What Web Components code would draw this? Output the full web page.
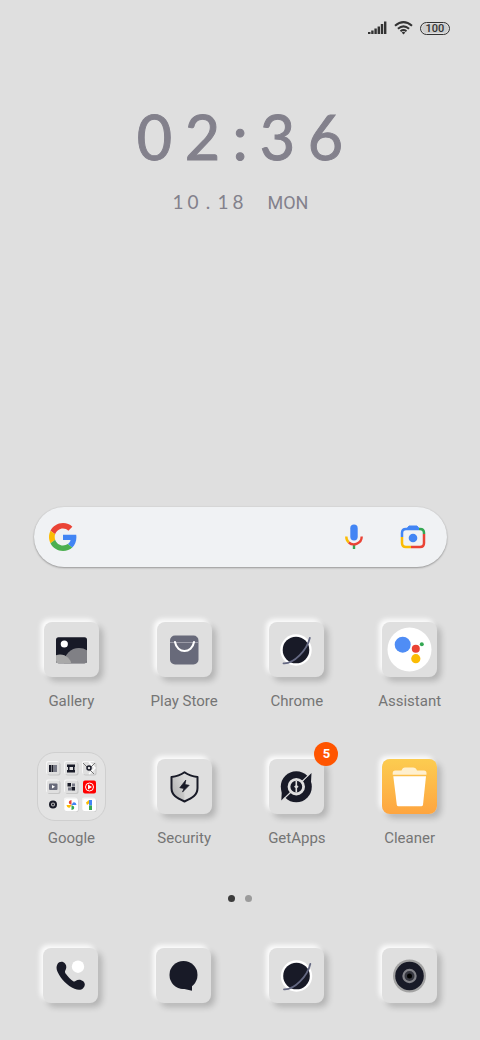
<!DOCTYPE html>
<html lang="en">
<head>
<meta charset="utf-8">
<meta name="viewport" content="width=device-width, initial-scale=1">
<title>Home screen</title>
<style>
  html, body { margin: 0; background: #dfdfdf; }
  body { font-family: Roboto, "Liberation Sans", sans-serif; color: #757575; }
</style>
</head>
<body>
<home-screen></home-screen>

<template id="status-bar">
  <style>
    :host { display: flex; justify-content: flex-end; align-items: center; gap: 7px; height: 14px; padding: 21px 30px 0 0; color: #333; }
    svg { display: block; }
    .battery { box-sizing: border-box; width: 30px; height: 13px; border: 1px solid #333; border-radius: 7px; background: #cdcdcd; box-shadow: inset 0 0 0 1px #dfdfdf; font-size: 11px; line-height: 12px; font-weight: 500; text-align: center; }
  </style>
  <svg width="19" height="14" viewBox="0 0 19 14" fill="#333"><path d="M0 11h2.500v2H0zM3.200 9.500h2.400V13H3.200zM6.400 7.500h2.400V13H6.400zM9.600 5.500H12V13H9.600zM12.800 3h2.400v10h-2.400zM16 .5h2.400V13H16z"/></svg>
  <svg width="19" height="14" viewBox="0 0 19 14" fill="none" stroke="#333" stroke-width="2"><path d="M1 4.800Q9.500-2.600 18 4.800M3.900 7.700Q9.500 3 15.100 7.700M6.500 10.200Q9.500 7.900 12.500 10.200"/><path d="M7.700 11.400Q9.500 10.200 11.300 11.400L9.500 13.500z" fill="#333" stroke="none"/></svg>
  <div class="battery">100</div>
</template>

<template id="clock-widget">
  <style>
    :host { display: block; text-align: center; color: #83818c; padding-top: 66px; }
    div { white-space: nowrap; }
    span { display: inline-block; }
    .time { font-family: Lato, sans-serif; font-size: 61px; line-height: 72px; -webkit-text-stroke: 1px #83818c; }
    .time span { width: 48px; }
    .time .colon { width: 27px; }
    .date { font-family: Lato, sans-serif; font-size: 19px; line-height: 24px; margin-top: 17px; }
    .date span { width: 15px; }
    .date .month { width: 43px; margin-left: 16px; font-family: Roboto, sans-serif; font-size: 18px; }
  </style>
  <div class="time"><span>0</span><span>2</span><span class="colon">:</span><span>3</span><span>6</span></div>
  <div class="date"><span>1</span><span>0</span><span>.</span><span>1</span><span>8</span> <span class="month">MON</span></div>
</template>

<template id="search-bar">
  <style>
    :host { display: block; margin: 0 33px 0 34px; }
    form { display: flex; align-items: center; height: 60px; padding: 0 20px 0 15px; border-radius: 30px; background: #f0f2f4; box-shadow: 0 1px 2px #0000004d, 0 0 2px #00000014; }
    svg { display: block; }
    input { flex: 1; min-width: 0; height: 40px; margin: 0 12px; padding: 0; border: 0; outline: 0; background: none; font: 16px Roboto, sans-serif; }
    button { padding: 0; border: 0; background: none; }
    .lens { margin-left: 35px; }
  </style>
  <form>
    <svg width="28" height="28" viewBox="0 0 48 48">
      <path fill="#ea4335" d="M24 9.500c3.540 0 6.710 1.220 9.210 3.600l6.850-6.850C35.900 2.380 30.470 0 24 0 14.620 0 6.510 5.380 2.560 13.220l7.980 6.190C12.430 13.720 17.740 9.500 24 9.500z"/>
      <path fill="#4285f4" d="M46.980 24.550c0-1.570-.15-3.090-.38-4.550H24v9.020h12.940c-.58 2.960-2.260 5.480-4.780 7.180l7.730 6c4.510-4.180 7.090-10.360 7.090-17.650z"/>
      <path fill="#fbbc05" d="M10.530 28.590c-.48-1.450-.76-2.990-.76-4.590s.27-3.140.76-4.590l-7.980-6.190C.92 16.460 0 20.120 0 24s.92 7.540 2.560 10.780l7.970-6.190z"/>
      <path fill="#4caf50" d="M24 48c6.480 0 11.930-2.130 15.890-5.810l-7.730-6c-2.150 1.450-4.920 2.300-8.160 2.300-6.260 0-11.570-4.220-13.470-9.910l-7.980 6.190C6.510 42.620 14.620 48 24 48z"/>
    </svg>
    <input type="search" aria-label="Search">
    <button type="button" aria-label="Voice search">
      <svg width="20" height="28" viewBox="0 0 20 28" fill="none" stroke-width="2.400">
        <rect x="6.300" y="1.500" width="7.400" height="16" rx="3.700" fill="#4285f4"/>
        <path d="M10 21v5" stroke="#34a853"/><path d="M2.300 13.500Q2.300 17.500 4.800 19.500" stroke="#fbbc04"/><path d="M4.800 19.500C9.500 23.500 17.700 20.500 17.700 13.500" stroke="#ea4335"/>
      </svg>
    </button>
    <button class="lens" type="button" aria-label="Camera search">
      <svg width="28" height="28" viewBox="0 0 28 28" fill="none" stroke-width="2.500">
        <path d="M3 14V10Q3 6 7 6H20" stroke="#4285f4"/><path d="M8 5.500L10 3h8l2 2.500z" fill="#4285f4" stroke="#4285f4" stroke-width="1"/>
        <path d="M20 6h1q4 0 4 4v1" stroke="#34a853"/><path d="M25 11v9q0 4-4 4h-9" stroke="#ea4335"/><path d="M12 24H7q-4 0-4-4v-6" stroke="#fbbc04"/>
        <circle cx="14" cy="15" r="4.300" fill="#4285f4"/>
      </svg>
    </button>
  </form>
</template>

<template id="app-tile">
  <style>
    :host { display: block; }
    button { display: flex; flex-direction: column; align-items: center; width: 100%; padding: 0; border: 0; background: none; color: inherit; font-family: inherit; font-size: 15px; line-height: 20px; }
    .area { display: grid; place-items: center; height: 69px; position: relative; }
    .tile { width: 55px; height: 55px; border-radius: 8px; background: var(--tile, #dfdfdf); box-shadow: -3px -3px 5px #fffffff0, 4px 4px 6px #00000033; }
    .label { margin-top: 7px; }
    .badge { position: absolute; right: -14px; top: -10px; width: 24px; height: 24px; border-radius: 50%; background: #ff5500; color: #fff; font-size: 13px; line-height: 24px; font-weight: 700; }
    :host([folder]) .tile { width: 67px; height: 67px; border: 1px solid #cfcfcf; border-radius: 18px; background: #e3e3e3; box-shadow: none; }
    :host([dock]) .area { height: 55px; }
    [hidden] { display: none; }
  </style>
  <button type="button"><span class="area"><span class="tile"><slot></slot></span><span class="badge" hidden></span></span><span class="label" hidden></span></button>
</template>

<template id="page-dots">
  <style>
    :host { display: flex; justify-content: center; gap: 10px; padding-top: 47px; }
    i { width: 7px; height: 7px; border-radius: 50%; background: #9b9b9b; }
    i.current { background: #3c3c3c; }
  </style>
  <i class="current"></i><i></i>
</template>

<template id="home-screen">
  <style>
    :host { display: flex; flex-direction: column; min-height: 100vh; }
    search-bar { margin-top: auto; }
    svg { display: block; }
    .apps, .dock { display: grid; grid-template-columns: repeat(4, 1fr); }
    .apps { gap: 41px 0; padding: 48px 14px 0 15px; }
    .dock { padding: 46px 14px 37px; }
  </style>
  <status-bar></status-bar>
  <clock-widget></clock-widget>
  <search-bar></search-bar>
  <main class="apps">
    <app-tile label="Gallery"><svg width="55" height="55" viewBox="0 0 55 55">
      <clipPath id="frame"><rect x="12" y="15.300" width="31" height="26" rx="2.500"/></clipPath>
      <g clip-path="url(#frame)"><path fill="#181a27" d="M12 15h31v27H12z"/><circle cx="35" cy="41" r="15" fill="#808085"/><circle cx="16" cy="44" r="11.500" fill="#a9a9a9"/></g><circle cx="20.300" cy="22" r="3.600" fill="#fff"/></svg></app-tile>
    <app-tile label="Play Store"><svg width="55" height="55" viewBox="0 0 55 55">
      <rect x="13" y="13.500" width="28.500" height="29" rx="5" fill="#686a7a"/><path d="M13 20.500h28.500" stroke="#a9aab4" stroke-width=".8"/><path d="M18 20c2 12 17 12 19 0" fill="none" stroke="#fff" stroke-width="2" stroke-linecap="round"/></svg></app-tile>
    <app-tile label="Chrome"><svg width="55" height="55" viewBox="0 0 55 55">
      <circle cx="27" cy="28" r="15.700" fill="#fff"/><circle cx="27" cy="28" r="13.300" fill="#181a27"/><path d="M14.500 41.300C25 42 38 28 40.800 16" fill="none" stroke="#656983" stroke-width="1.800" stroke-linecap="round"/></svg></app-tile>
    <app-tile label="Assistant"><svg width="55" height="55" viewBox="0 0 55 55">
      <circle cx="27.500" cy="27.500" r="22" fill="#fff"/><circle cx="20.700" cy="22.700" r="8" fill="#4f8df5"/><circle cx="33.800" cy="26.700" r="4" fill="#ea4335"/><circle cx="39.800" cy="22.300" r="2" fill="#34a853"/><circle cx="33.800" cy="36.700" r="4.600" fill="#fbbc04"/></svg></app-tile>

    <app-tile label="Google" folder><svg width="67" height="67" viewBox="1 1 67 67">
      <defs><g id="mini"><rect x="-5.500" y="-5.500" width="13" height="13" rx="2" fill="#c6c6c6"/><rect x="-7" y="-7" width="13" height="13" rx="2" fill="#f6f6f6"/><rect x="-6" y="-6" width="12.500" height="12.500" rx="2" fill="#dfdfdf"/></g></defs>
      <g transform="translate(16 16)"><use href="#mini"/><path fill="#181a27" d="M-4-3h2v7h-2zM-1.500-3h2v7h-2z"/><path fill="#777986" d="M1-3h3v7H1z"/></g>
      <g transform="translate(34 16)"><use href="#mini"/><path fill="#181a27" d="M-4-3.500h8V-1h-8zM-4 2h8v2.500h-8zM-3-1h1.500v3H-3zM2-1h1.500v3H2z"/></g>
      <g transform="translate(52 16)"><use href="#mini"/><path fill="none" stroke="#fff" stroke-width="1.500" d="M0-6L6 0 0 6"/><path stroke="#777" d="M-6-5L5 6M6-5L-1 2"/><circle r="2" fill="#ddd" stroke="#181a27" stroke-width="1.500"/></g>
      <g transform="translate(16 34.500)"><use href="#mini"/><rect x="-4" y="-3" width="8.500" height="6.500" rx="1" fill="#686a7a"/><path fill="#fff" d="M-1-1.500L2 .2-1 2z"/></g>
      <g transform="translate(34 34.500)"><use href="#mini"/><path fill="#181a27" d="M-3.500-3.500H0V0h-3.500zM.5.500H4V4H.500z"/><path fill="#777986" d="M1-3h3v3H1zM-3 1h3v3h-3z"/></g>
      <g transform="translate(52 34.500)"><rect x="-6" y="-6" width="13" height="13" rx="2" fill="#ff0000"/><circle cx=".5" cy=".5" r="4" fill="none" stroke="#fff"/><path fill="#fff" d="M-1-2L3 .5-1 3z"/></g>
      <g transform="translate(16 52.500)"><circle r="3" fill="#bbb" stroke="#181a27" stroke-width="2"/><circle r="1" fill="#181a27"/></g>
      <g transform="translate(34 52.500)"><use href="#mini"/><rect x="-6" y="-6" width="13" height="13" rx="2" fill="#fff"/><path fill="#ea4335" d="M.5.500V-4.500Q-3-4-2-1z"/><path fill="#4285f4" d="M.5.500h5Q5-3 2-2z"/><path fill="#34a853" d="M.5.500v5Q4 5 3 2z"/><path fill="#fbbc04" d="M.5.500h-5Q-4 4-1 3z"/></g>
      <g transform="translate(52 52.500)"><use href="#mini"/><rect x="-6" y="-6" width="13" height="13" rx="2" fill="#fff"/><path fill="#4285f4" d="M0-4.500H3V1H0z"/><path fill="#fbbc04" d="M-3-2L0-4.500V-1l-2 1.500z"/><path fill="#34a853" d="M0 1H3v4.500H0z"/></g></svg></app-tile>
    <app-tile label="Security"><svg width="55" height="55" viewBox="0 0 55 55">
      <linearGradient id="metal" x1="0" y1="1" x2="1" y2="0"><stop offset="0" stop-color="#aaa"/><stop offset="1" stop-color="#ddd"/></linearGradient>
      <path fill="#d9d9d9" d="M27.500 13L41 18v12c0 6-6 10-13.500 13z"/><path fill="url(#metal)" d="M27.500 13L14 18v12c0 6 6 10 13.500 13z"/>
      <path d="M27.500 13.200C23 16.500 19 17.500 14.500 18v11c0 7 5 10 13 13.500 8-3.500 13-6.500 13-13.500V18c-4.500-.5-8.500-1.500-13-4.800z" fill="none" stroke="#181a27" stroke-width="2" stroke-linejoin="round"/><path fill="#181a27" stroke="#181a27" stroke-width=".7" d="M28.800 21l-6 7.700 4.100.8-1.400 3.600 6.700-6.800-4.200-.8z"/></svg></app-tile>
    <app-tile label="GetApps" badge="5"><svg width="55" height="55" viewBox="0 0 55 55">
      <circle cx="27.300" cy="27.700" r="15.500" fill="#181a27"/>
      <path stroke="#dfdfdf" stroke-width="1.200" d="M41 15L33 22.500M14 40.500l8-7.500"/>
      <path fill="#181a27" d="M35 21.500L42.500 14l-.5 9-1 6zM19.500 34L12.300 41.500l.5-9 1-6z"/>
      <circle cx="27.300" cy="27.700" r="7.300" fill="#181a27" stroke="#dfdfdf" stroke-width="2.800"/><path fill="#dfdfdf" d="M26.500 22h1.600v4.300l1.500 1.400-1.500 1.400v4.300h-1.600v-4.300L25 27.700l1.500-1.400z"/></svg></app-tile>
    <app-tile label="Cleaner" style="--tile: linear-gradient(#fccc50, #fea540)"><svg width="55" height="55" viewBox="0 0 55 55">
      <path fill="#fff0cf" d="M10.700 15.800v-1.800q0-2.500 2.500-2.500h6.300q1-3 3.500-3h8q3 0 4 3h7q2.500 0 2.500 2.500v1.800z"/><path fill="#fff" d="M11.300 17.300H44l-3 28.500q-.2 1.500-1.800 1.500H16.500q-1.500 0-1.700-1.500z"/></svg></app-tile>
  </main>
  <page-dots></page-dots>
  <nav class="dock" aria-label="Dock">
    <app-tile dock name="Phone"><svg width="55" height="55" viewBox="0 0 55 55">
      <path fill="#181a27" d="M14.500 16C16 13.500 20 13 22 15.500c2 2.500 1.500 5 .2 7.200-.5 1-.2 2 .8 3.300 2 2.800 4.500 5.400 7.200 7.200 1 .6 1.800.3 2.700-.4 2-1.600 5-1.500 7.400.5 2.200 2 2 5-.2 7-2 1.900-5 2-8.600.5-7-3-13.500-9.500-17-17-1.200-2.800-1.400-5.300 0-7.800z"/><circle cx="35" cy="18.700" r="6.200" fill="#fff"/></svg></app-tile>
    <app-tile dock name="Messages"><svg width="55" height="55" viewBox="0 0 55 55">
      <circle cx="27.500" cy="27" r="14" fill="#181a27"/><path fill="#181a27" d="M24 40l12 2.700V36z"/></svg></app-tile>
    <app-tile dock name="Chrome"><svg width="55" height="55" viewBox="0 0 55 55">
      <circle cx="27.500" cy="28" r="15.700" fill="#fff"/><circle cx="27.500" cy="28" r="13.300" fill="#181a27"/><path d="M15 41.300C25.500 42 38.500 28 41.300 16" fill="none" stroke="#656983" stroke-width="1.800" stroke-linecap="round"/></svg></app-tile>
    <app-tile dock name="Camera"><svg width="55" height="55" viewBox="0 0 55 55">
      <circle cx="27.500" cy="28" r="16.500" fill="#a3a3a3"/><circle cx="27.500" cy="28" r="14.300" fill="#181a27"/><circle cx="27.500" cy="28" r="7.200" fill="#828288"/><circle cx="27.500" cy="28" r="5" fill="#35363f"/><circle cx="27.500" cy="28" r="2.500" fill="#000"/></svg></app-tile>
  </nav>
</template>

<script>
  class TemplateElement extends HTMLElement {
    constructor() {
      super();
      const template = document.getElementById(this.localName);
      this.attachShadow({ mode: "open" }).append(template.content.cloneNode(true));
    }
  }
  class AppTile extends TemplateElement {
    connectedCallback() {
      for (const key of ["label", "badge"]) {
        const value = this.getAttribute(key);
        const part = this.shadowRoot.querySelector("." + key);
        part.hidden = !value;
        part.textContent = value || "";
      }
      const name = this.getAttribute("name");
      if (name) this.shadowRoot.querySelector("button").setAttribute("aria-label", name);
    }
  }
  customElements.define("status-bar", class extends TemplateElement {});
  customElements.define("clock-widget", class extends TemplateElement {});
  customElements.define("search-bar", class extends TemplateElement {});
  customElements.define("app-tile", AppTile);
  customElements.define("page-dots", class extends TemplateElement {});
  customElements.define("home-screen", class extends TemplateElement {});
</script>
</body>
</html>
